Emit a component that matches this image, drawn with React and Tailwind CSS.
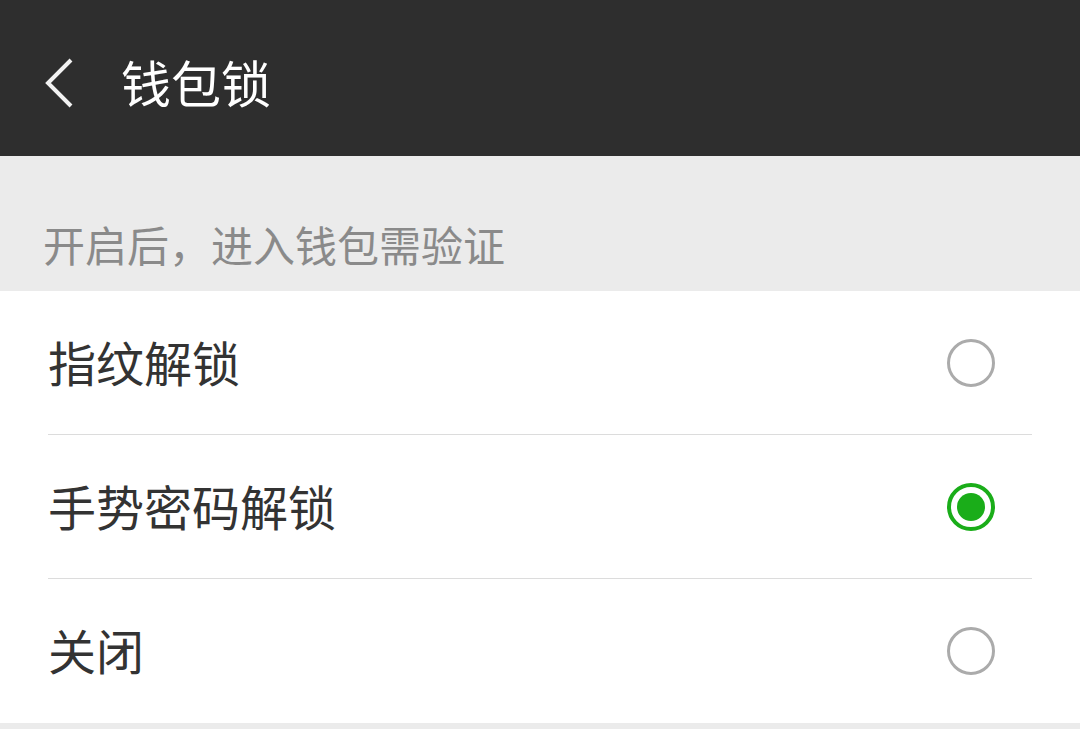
import React from "react";

const items = [
  { label: "指纹解锁", checked: false },
  { label: "手势密码解锁", checked: true },
  { label: "关闭", checked: false },
];

function Radio({ checked }) {
  if (checked) {
    return (
      <div className="w-[48px] h-[48px] rounded-full border-[4px] border-[#1aad19] flex items-center justify-center">
        <div className="w-[28px] h-[28px] rounded-full bg-[#1aad19]" />
      </div>
    );
  }
  return <div className="w-[48px] h-[48px] rounded-full border-[3px] border-[#ababab]" />;
}

export default function App() {
  return (
    <div
      className="w-[1080px] h-[729px] bg-[#ebebeb] overflow-hidden"
      style={{ fontFamily: '"Noto Sans CJK SC", "Noto Sans", sans-serif' }}
    >
      <div className="h-[156px] bg-[#2e2e2e] flex items-center pl-[44px] pt-[10px]">
        <svg width="30" height="50" viewBox="0 0 30 50" className="shrink-0">
          <path d="M27 2 L4 25 L27 48" fill="none" stroke="#f2f2f2" strokeWidth="4" strokeLinecap="butt" strokeLinejoin="miter" />
        </svg>
        <div className="ml-[47px] text-[50px] leading-none text-white pb-[4px]">钱包锁</div>
      </div>
      <div className="h-[135px] pl-[43px] pt-[67px]">
        <div className="text-[42px] leading-none text-[#8a8a8a]">开启后，进入钱包需验证</div>
      </div>
      <div className="bg-white">
        {items.map((it, i) => (
          <div key={it.label} className="pl-[48px] pr-[48px]">
            <div
              className={
                "h-[144px] flex items-center justify-between" +
                (i < items.length - 1 ? " border-b border-[#dcdcdc]" : "")
              }
            >
              <span className="text-[48px] leading-none text-[#333333] pb-[4px]">{it.label}</span>
              <div className="mr-[37px]">
                <Radio checked={it.checked} />
              </div>
            </div>
          </div>
        ))}
      </div>
    </div>
  );
}
